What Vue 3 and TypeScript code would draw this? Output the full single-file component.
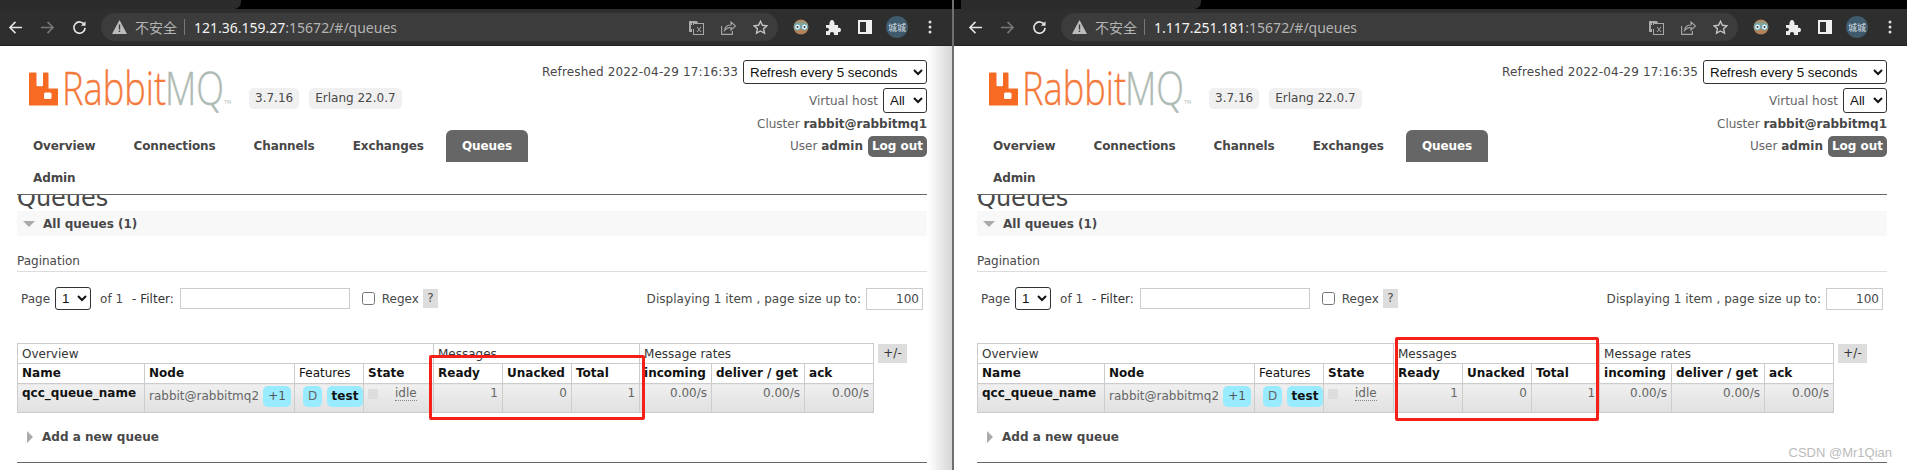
<script setup lang="ts">
interface BrowserWindow {
    id: string,
    host: string,
    refreshed: string,
    // red annotation drawn over the table
    box: { left: number, top: number, width: number, height: number }
}

const windows: BrowserWindow[] = [
    { id: 'left', host: '121.36.159.27', refreshed: '2022-04-29 17:16:33', box: { left: 429, top: 355, width: 216, height: 65 } },
    { id: 'right', host: '1.117.251.181', refreshed: '2022-04-29 17:16:35', box: { left: 441, top: 337, width: 204, height: 84 } }
]

const navItems = ['Overview', 'Connections', 'Channels', 'Exchanges', 'Queues', 'Admin']
const activeNav = 'Queues'

const columns = [
    { label: 'Name', bold: true, width: 127 },
    { label: 'Node', bold: true, width: 150 },
    { label: 'Features', bold: false, width: 69 },
    { label: 'State', bold: true, width: 70 },
    { label: 'Ready', bold: true, width: 69 },
    { label: 'Unacked', bold: true, width: 69 },
    { label: 'Total', bold: true, width: 68 },
    { label: 'incoming', bold: true, width: 72 },
    { label: 'deliver / get', bold: true, width: 93 },
    { label: 'ack', bold: true, width: 69 }
]

const numbers = ['1', '0', '1', '0.00/s', '0.00/s', '0.00/s']
</script>

<template>
    <div class="screen">
        <section v-for="win in windows" :key="win.id" :class="['win', `win--${win.id}`]">
            <div class="tabstrip">
                <div class="tabstrip__tab"></div>
            </div>
            <div class="toolbar">
                <svg class="tool" viewBox="0 0 16 16" fill="none" stroke="#e6e6e6" stroke-width="1.6">
                    <path d="M15 8H2M8 2 2 8l6 6" />
                </svg>
                <svg class="tool" viewBox="0 0 16 16" fill="none" stroke="#787878" stroke-width="1.6">
                    <path d="M1 8h13M8 2l6 6-6 6" />
                </svg>
                <svg class="tool" viewBox="0 0 16 16" fill="none" stroke="#e6e6e6" stroke-width="1.7">
                    <path d="M13.3 5.2A6 6 0 1 0 14 8.4" />
                    <path d="M14.4 1.2v4.9H9.5z" fill="#e6e6e6" stroke="none" />
                </svg>
                <div class="address">
                    <svg class="address__warn" viewBox="0 0 15 14">
                        <path d="M7.5 0 15 14H0z" fill="#bdbdbd" />
                        <path d="M6.8 4.5h1.4v5H6.8zM6.8 10.5h1.4V12H6.8z" fill="#3c3c3c" />
                    </svg>
                    <span class="address__note">不安全</span>
                    <span class="address__sep"></span>
                    <span class="address__host">{{ win.host }}</span><span class="address__path">:15672/#/queues</span>
                    <div class="address__icons">
                        <svg viewBox="0 0 15 15" class="aicon">
                            <path d="M0 1h8l1 2h-6v9H0z" fill="#a8a8a8" />
                            <rect x="4.5" y="3.5" width="10" height="11" fill="none" stroke="#a8a8a8" />
                            <path d="M2 5h4v4H2z" fill="#3c3c3c" />
                            <path d="m8 7 4 5M12 7l-4 5" stroke="#a8a8a8" />
                        </svg>
                        <svg viewBox="0 0 15 15" class="aicon" fill="none" stroke="#a8a8a8" stroke-width="1.1">
                            <path d="M.6 6v8.4h10.8V11" />
                            <path d="M3.5 10.5C4 6.5 6.5 5 10 5V2l4.5 4-4.5 4V7.500C7.500 7.500 5 8.500 3.500 10.500z" />
                        </svg>
                        <svg viewBox="0 0 15 15" class="aicon" fill="none" stroke="#c4c4c4" stroke-width="1.4">
                            <path d="m7.500 1.300 1.900 4 4.400.5-3.200 3 .9 4.400-4-2.200-4 2.200.9-4.400-3.200-3 4.400-.5z" />
                        </svg>
                    </div>
                </div>
                <div class="extras">
                    <svg class="extras__head" viewBox="0 0 16 16">
                        <circle cx="8" cy="8" r="7.500" fill="#b5835a" />
                        <path d="M1 6C2 1 14 1 15 6z" fill="#8f9e86" />
                        <circle cx="4.500" cy="8" r="3" fill="#e8f4f6" stroke="#5aa6b8" />
                        <circle cx="11.500" cy="8" r="3" fill="#e8f4f6" stroke="#5aa6b8" />
                        <circle cx="4.500" cy="8" r="1" fill="#333" />
                        <circle cx="11.500" cy="8" r="1" fill="#333" />
                    </svg>
                    <svg class="extras__puzzle" viewBox="0 0 15 15">
                        <path d="M0 5h3.500C3 2 4.500 0 6 0s3 2 2.500 5H12v3c2-.6 3 .6 3 2s-1 2.600-3 2v3H8c.6-2-.6-3-2-3s-2.600 1-2 3H0v-4c2 .6 3-.6 3-1.500S2 7.500 0 8z" fill="#ececec" />
                    </svg>
                    <svg class="extras__panel" viewBox="0 0 14 14">
                        <path d="M0 0h14v14H0z" fill="#f0f0f0" />
                        <path d="M2 2h6v10H2z" fill="#2e2e2e" />
                    </svg>
                    <span class="extras__avatar">城城</span>
                    <svg class="extras__dots" viewBox="0 0 4 14" fill="#e0e0e0">
                        <circle cx="2" cy="2" r="1.500" />
                        <circle cx="2" cy="7" r="1.500" />
                        <circle cx="2" cy="12" r="1.500" />
                    </svg>
                </div>
            </div>

            <div class="page">
                <header class="header">
                    <div class="header__left">
                        <div class="brand">
                            <svg class="brand__logo" viewBox="0 0 204 36">
                                <path d="M0 2.500a1 1 0 0 1 1-1h5.500a1 1 0 0 1 1 1V14a1.200 1.200 0 0 0 1.200 1.200h4.100a1.200 1.200 0 0 0 1.200-1.200V2.500a1 1 0 0 1 1-1h3.500a1 1 0 0 1 1 1V17.500h8.500a1 1 0 0 1 1 1V34.500H0zM16.500 21.500a1.500 1.500 0 0 0-1.500 1.500v3.500a1.500 1.500 0 0 0 1.500 1.500h4.500a1.500 1.500 0 0 0 1.500-1.500V23a1.500 1.500 0 0 0-1.500-1.500z" fill="#f66a24" fill-rule="evenodd" />
                                <text x="33" y="34" class="brand__word" fill="#f47a3c" stroke="#f47a3c" textLength="104" lengthAdjust="spacingAndGlyphs">Rabbit</text>
                                <text x="136" y="34" class="brand__word" fill="#aebab4" stroke="#aebab4" textLength="59" lengthAdjust="spacingAndGlyphs">MQ</text>
                                <text x="195" y="33" class="brand__tm" fill="#b5bfba">TM</text>
                            </svg>
                            <span class="badge badge--first">3.7.16</span>
                            <span class="badge">Erlang 22.0.7</span>
                        </div>
                        <nav class="nav">
                            <a v-for="item in navItems" :key="item" :class="['nav__item', { 'nav__item--active': item === activeNav }]">{{ item }}</a>
                        </nav>
                    </div>
                    <div class="status">
                        <div class="status__row status__row--refresh">
                            <span class="status__stamp">Refreshed {{ win.refreshed }}</span>
                            <select class="native status__refresh">
                                <option>Refresh every 5 seconds</option>
                            </select>
                        </div>
                        <div class="status__row status__row--vhost">
                            <span>Virtual host</span>
                            <select class="native status__vhost">
                                <option>All</option>
                            </select>
                        </div>
                        <div class="status__row status__row--cluster">
                            <span>Cluster <b>rabbit@rabbitmq1</b></span>
                        </div>
                        <div class="status__row status__row--user">
                            <span>User <b>admin</b></span>
                            <button class="logout">Log out</button>
                        </div>
                    </div>
                </header>

                <main class="main">
                    <h1 class="title">Queues</h1>
                    <div class="section-head">
                        <span class="tri tri--down"></span>
                        <b>All queues (1)</b>
                    </div>
                    <h3 class="pagination-title">Pagination</h3>
                    <div class="pager">
                        <span>Page</span>
                        <select class="native pager__page">
                            <option>1</option>
                        </select>
                        <span class="pager__of">of 1</span>
                        <span class="pager__filter">- Filter:</span>
                        <input class="pager__input" type="text" />
                        <input class="pager__check" type="checkbox" />
                        <span class="pager__regex">Regex</span>
                        <span class="pager__help">?</span>
                        <span class="pager__display">Displaying 1 item , page size up to:</span>
                        <input class="pager__size" type="text" value="100" />
                    </div>

                    <div class="table-row">
                        <table class="queues">
                            <colgroup>
                                <col v-for="col in columns" :key="col.label" :style="{ width: col.width + 'px' }" />
                            </colgroup>
                            <thead>
                                <tr class="queues__groups">
                                    <th colspan="4">Overview</th>
                                    <th colspan="3">Messages</th>
                                    <th colspan="3">Message rates</th>
                                </tr>
                                <tr class="queues__heads">
                                    <th v-for="col in columns" :key="col.label" :class="{ 'is-bold': col.bold }">{{ col.label }}</th>
                                </tr>
                            </thead>
                            <tbody>
                                <tr class="queues__row">
                                    <td class="queues__name">qcc_queue_name</td>
                                    <td class="queues__node">
                                        rabbit@rabbitmq2<span class="pill pill--plus">+1</span>
                                    </td>
                                    <td class="queues__features">
                                        <span class="pill pill--d">D</span><span class="pill pill--test">test</span>
                                    </td>
                                    <td class="queues__state">
                                        <span class="queues__square"></span><span class="queues__idle">idle</span>
                                    </td>
                                    <td v-for="(num, i) in numbers" :key="i" class="queues__num">{{ num }}</td>
                                </tr>
                            </tbody>
                        </table>
                        <span class="plus-minus">+/-</span>
                    </div>

                    <div class="add-queue">
                        <span class="tri tri--right"></span>
                        <b>Add a new queue</b>
                    </div>
                </main>
            </div>

            <div
                class="redbox"
                :style="{ left: win.box.left + 'px', top: win.box.top + 'px', width: win.box.width + 'px', height: win.box.height + 'px' }"
            ></div>
        </section>
        <span class="watermark">CSDN @Mr1Qian</span>
    </div>
</template>

<style scoped>
.screen {
    position: relative;
    display: flex;
    width: 1907px;
    height: 470px;
    overflow: hidden;
    background: #fff;
    font-family: "DejaVu Sans", Verdana, sans-serif;
    font-size: 12px;
    color: #484848;
}

.win {
    position: relative;
    flex: 0 0 952px;
    width: 952px;
    height: 470px;
    overflow: hidden;
}

.win--left::after {
    content: '';
    position: absolute;
    top: 46px;
    right: 0;
    bottom: 0;
    width: 24px;
    background: linear-gradient(to right, rgba(0, 0, 0, 0), rgba(0, 0, 0, 0.16));
}

.win--right {
    flex: 0 0 953px;
    width: 953px;
    box-sizing: border-box;
    margin-left: 2px;
    padding-left: 6px;
    background: #fff;
}

.screen::before {
    content: '';
    position: absolute;
    left: 952px;
    top: 0;
    bottom: 0;
    width: 2px;
    background: #6f6f6f;
    z-index: 3;
}

.tabstrip {
    height: 9px;
    background: #000;
    width: 960px;
}

.tabstrip__tab {
    width: 241px;
    height: 9px;
    background: #2b2b2b;
    border-bottom-right-radius: 7px;
}

.win--right .tabstrip {
    margin-left: -6px;
    padding-left: 7px;
}

.win--right .tabstrip__tab {
    width: 240px;
}

.toolbar {
    display: flex;
    align-items: center;
    width: 952px;
    height: 37px;
    padding: 0 0 0 8px;
    box-sizing: border-box;
    background: #2e2e2e;
    border-bottom: 1px solid #222;
    font-family: "Noto Sans", "Noto Sans CJK SC", sans-serif;
}

.win--right .toolbar {
    margin-left: -6px;
    width: 958px;
    padding-left: 14px;
}

.tool {
    flex: none;
    width: 15px;
    height: 15px;
    margin-right: 17px;
}

.address {
    display: flex;
    align-items: center;
    flex: none;
    width: 677px;
    height: 28px;
    margin-left: -3px;
    padding: 0 10px 0 11px;
    box-sizing: border-box;
    border-radius: 14px;
    background: #3c3c3c;
    font-size: 14px;
}

.address__warn {
    width: 15px;
    height: 14px;
    margin-right: 8px;
}

.address__note {
    color: #b4b4b4;
    font-family: "Noto Sans CJK SC", sans-serif;
    font-size: 14px;
}

.address__sep {
    width: 1px;
    height: 16px;
    margin: 0 9px 0 7px;
    background: #777;
}

.address__host {
    color: #f2f2f2;
}

.address__path {
    color: #b4b4b4;
}

.address__icons {
    display: flex;
    gap: 17px;
    margin-left: auto;
}

.aicon {
    width: 15px;
    height: 15px;
}

.extras {
    display: flex;
    align-items: center;
    margin-left: 15px;
}

.extras__head {
    width: 16px;
    height: 16px;
    margin-right: 17px;
}

.extras__puzzle {
    width: 15px;
    height: 15px;
    margin-right: 17px;
}

.extras__panel {
    width: 14px;
    height: 14px;
    margin-right: 14px;
}

.extras__avatar {
    display: flex;
    align-items: center;
    justify-content: center;
    width: 22px;
    height: 22px;
    margin-right: 20px;
    border-radius: 50%;
    background: #3f5a6b;
    color: #d8dee2;
    font-family: "Noto Sans CJK SC", sans-serif;
    font-size: 9px;
}

.extras__dots {
    width: 4px;
    height: 14px;
}

.page {
    width: 910px;
    margin-left: 17px;
}

.header {
    display: flex;
    justify-content: space-between;
    height: 148px;
    border-bottom: 1px solid #666;
}

.header__left {
    width: 530px;
}

.brand {
    display: flex;
    align-items: flex-start;
    height: 84px;
    padding: 25px 0 0 12px;
    box-sizing: border-box;
}

.brand__logo {
    flex: none;
    width: 204px;
    height: 36px;
    overflow: visible;
}

.brand__word {
    font-family: "Open Sans", "Liberation Sans", sans-serif;
    font-size: 46px;
    font-weight: 300;
    stroke-width: 0.4px;
}

.brand__tm {
    font-size: 5px;
}

.badge {
    margin: 17px 0 0 10px;
    padding: 0 6px;
    height: 21px;
    line-height: 21px;
    border-radius: 5px;
    background: #f0f0f0;
    white-space: nowrap;
}

.badge--first {
    margin-left: 16px;
}

.nav {
    display: flex;
    flex-wrap: wrap;
}

.nav__item {
    height: 32px;
    margin-right: 6px;
    padding: 0 16px;
    line-height: 32px;
    font-weight: 700;
    letter-spacing: -0.1px;
    border-radius: 6px 6px 0 0;
}

.nav__item--active {
    background: #666;
    color: #fff;
}

.status {
    display: flex;
    flex-direction: column;
    padding-top: 14px;
}

.status__row {
    display: flex;
    align-items: center;
    justify-content: flex-end;
    white-space: nowrap;
}

.status__stamp {
    letter-spacing: 0.15px;
}

.status__row--refresh {
    height: 24px;
    gap: 5px;
    margin-bottom: 4px;
}

.status__row--vhost {
    height: 25px;
    gap: 5px;
    color: #666;
}

.status__row--cluster {
    height: 22px;
    color: #666;
}

.status__row--user {
    height: 22px;
    gap: 5px;
    color: #666;
}

.status b {
    color: #484848;
}

.native {
    box-sizing: border-box;
    padding: 0 2px;
    border: 1px solid #333;
    border-radius: 3px;
    background-color: #fff;
    color: #111;
    font-family: "Liberation Sans", Arial, sans-serif;
    font-size: 13.33px;
}

.status__refresh {
    width: 184px;
    height: 24px;
}

.status__vhost {
    width: 44px;
    height: 25px;
}

.logout {
    width: 59px;
    height: 21px;
    padding: 0;
    border: none;
    border-radius: 5px;
    background: #666;
    color: #fff;
    font-family: inherit;
    font-size: 12px;
    font-weight: 600;
}

.main {
    height: 275px;
    overflow: hidden;
}

.title {
    height: 16px;
    margin: 0;
    font-size: 24px;
    font-weight: 400;
    line-height: 6px;
}

.section-head {
    display: flex;
    align-items: center;
    height: 25px;
    padding-left: 6px;
    background: #f8f8f8;
}

.section-head b {
    margin-left: 8px;
}

.tri {
    display: inline-block;
    width: 0;
    height: 0;
}

.tri--down {
    border-left: 6px solid transparent;
    border-right: 6px solid transparent;
    border-top: 6px solid #aaa;
}

.tri--right {
    border-top: 6px solid transparent;
    border-bottom: 6px solid transparent;
    border-left: 6px solid #aaa;
}

.pagination-title {
    height: 19px;
    margin: 16px 0 0;
    border-bottom: 1px solid #ddd;
    font-size: 12px;
    font-weight: 400;
    line-height: 18px;
}

.pager {
    display: flex;
    align-items: center;
    height: 25px;
    margin-top: 14px;
    padding-left: 4px;
}

.pager__page {
    width: 36px;
    height: 23px;
    margin-left: 5px;
}

.pager__of {
    margin-left: 9px;
}

.pager__filter {
    margin-left: 9px;
    color: #333;
}

.pager__input {
    width: 170px;
    height: 21px;
    margin: 0 0 0 6px;
    box-sizing: border-box;
    border: 1px solid #ccc;
}

.pager__check {
    width: 13px;
    height: 13px;
    margin: 0 0 0 12px;
}

.pager__regex {
    margin-left: 7px;
}

.pager__help {
    width: 15px;
    height: 19px;
    margin-left: 4px;
    line-height: 19px;
    text-align: center;
    background: #ddd;
}

.pager__display {
    margin-left: auto;
    margin-right: 5px;
    letter-spacing: 0.05px;
}

.pager__size {
    width: 57px;
    height: 22px;
    margin: 0 4px 0 0;
    padding: 0 3px;
    box-sizing: border-box;
    border: 1px solid #ccc;
    font-family: inherit;
    font-size: 12px;
    color: #484848;
    text-align: right;
}

.table-row {
    display: flex;
    align-items: flex-start;
    margin-top: 32px;
}

.queues {
    width: 856px;
    table-layout: fixed;
    border-collapse: collapse;
    color: #111;
}

.queues th,
.queues td {
    box-sizing: border-box;
    border: 1px solid #ccc;
    padding: 0 4px;
    text-align: left;
    white-space: nowrap;
}

.queues th {
    font-weight: 400;
    height: 20px;
}

.queues__groups th {
    color: #333;
}

.queues__heads th {
    padding-bottom: 1px;
}

.queues__heads th.is-bold {
    font-weight: 700;
}

.queues__row td {
    height: 29px;
    vertical-align: top;
    padding-top: 2px;
    background: linear-gradient(#f0f0f0, #e0e0e0);
}

.queues__row .queues__node,
.queues__row .queues__features {
    padding-left: 4px;
    padding-right: 0;
}

.queues__name {
    font-weight: 700;
}

.queues__node {
    color: #666;
}

.queues__num {
    color: #666;
    text-align: right !important;
}

.pill {
    display: inline-block;
    height: 21px;
    line-height: 21px;
    border-radius: 5px;
    background: #99ebff;
    text-align: center;
}

.pill--plus {
    width: 28px;
    margin-left: 4px;
    color: #555;
}

.pill--d {
    width: 19px;
    margin-left: 4px;
    color: #666;
}

.pill--test {
    width: 36px;
    margin-left: 5px;
    color: #111;
    font-weight: 700;
}

.queues__square {
    display: inline-block;
    width: 10px;
    height: 10px;
    background: #ddd;
    vertical-align: top;
    margin-top: 3px;
}

.queues__idle {
    margin-left: 17px;
    color: #666;
    border-bottom: 1px dotted #888;
}

.plus-minus {
    width: 29px;
    height: 19px;
    margin: 1px 0 0 4px;
    line-height: 19px;
    text-align: center;
    background: #ddd;
    color: #333;
}

.add-queue {
    display: flex;
    align-items: center;
    height: 24px;
    margin-top: 12px;
    padding-left: 10px;
    border: none;
}

.add-queue b {
    margin-left: 9px;
}

.main::after {
    content: '';
    display: block;
    margin-top: 13px;
    border-top: 1px solid #666;
}

.redbox {
    position: absolute;
    box-sizing: border-box;
    border: 3px solid #f5201a;
    border-radius: 2px;
    z-index: 2;
}

.watermark {
    position: absolute;
    right: 15px;
    top: 445px;
    color: #bbb;
    font-family: "Liberation Sans", Arial, sans-serif;
    font-size: 13px;
    z-index: 4;
}
</style>
